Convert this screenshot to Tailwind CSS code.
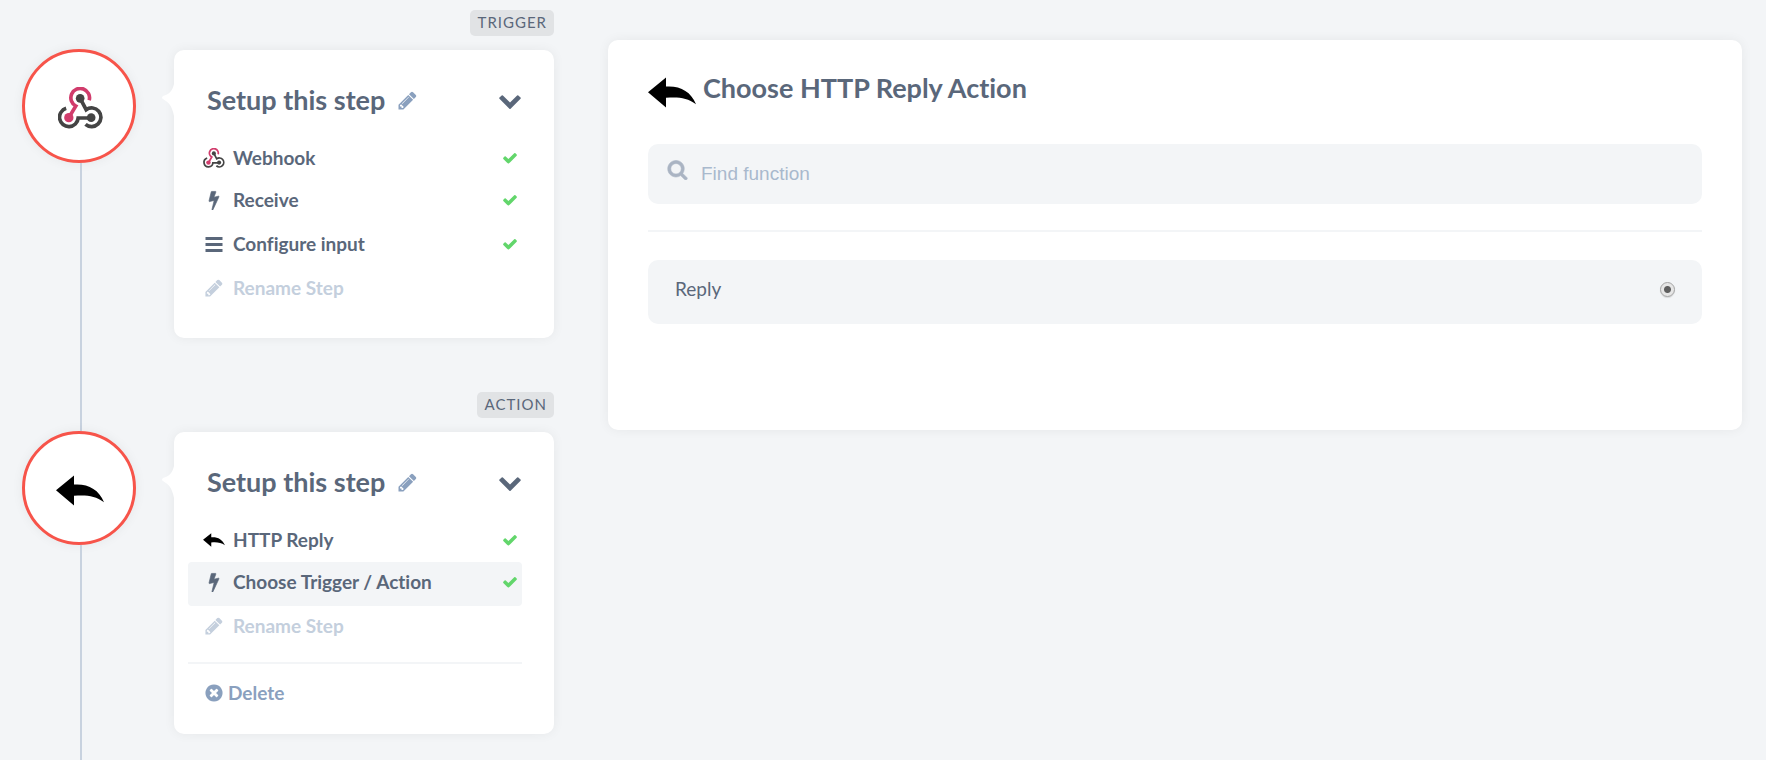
<!DOCTYPE html>
<html lang="en">
<head>
<meta charset="utf-8">
<meta name="viewport" content="width=device-width, initial-scale=1">
<title>Flow steps</title>
<script src="https://cdn.jsdelivr.net/npm/@tailwindcss/browser@4"></script>
</head>
<body class="bg-[#f3f5f7] font-['Lato','Open_Sans',sans-serif] text-[#5a677a] [font-variant-ligatures:no-common-ligatures]">
<svg class="hidden" aria-hidden="true">
  <symbol id="webhook" viewBox="0 0 134 126">
    <g fill="none" stroke-width="11">
      <path stroke="#444" d="M24 64A28 28 0 1 0 60 93H99M66 34L84 68A28 28 0 1 1 82 112"/>
      <path stroke="#d13c6c" d="M93 40A28 28 0 1 0 53 57L32 92"/>
    </g>
    <circle cx="66" cy="34" r="13" fill="#444"/>
    <circle cx="99" cy="92" r="13" fill="#444"/>
    <circle cx="32" cy="92" r="14" fill="#d13c6c"/>
  </symbol>
  <symbol id="reply" viewBox="0 0 144 92"><path fill="#000" d="M0 45L54 1V28C96 25 128 42 144 81C117 62 92 59 54 62V91Z"/></symbol>
  <symbol id="pencil" viewBox="0 0 1792 1792"><path fill="currentColor" d="M491 1536l91-91-235-235-91 91v107h128v128h107zm523-928q0-22-22-22-10 0-17 7l-542 542q-7 7-7 17 0 22 22 22 10 0 17-7l542-542q7-7 7-17zm-54-192l416 416-832 832h-416v-416zm683 96q0 53-37 90l-166 166-416-416 166-165q36-38 90-38 53 0 91 38l235 234q37 39 37 91z"/></symbol>
  <symbol id="check" viewBox="0 0 1792 1792"><path fill="currentColor" d="M1671 566q0 40-28 68l-724 724-136 136q-28 28-68 28t-68-28l-136-136-362-362q-28-28-28-68t28-68l136-136q28-28 68-28t68 28l294 295 656-657q28-28 68-28t68 28l136 136q28 28 28 68z"/></symbol>
  <symbol id="chevron" viewBox="0 0 1792 1792"><path fill="currentColor" d="M1683 808l-742 741q-19 19-45 19t-45-19l-742-741q-19-19-19-45.5t19-45.5l166-165q19-19 45-19t45 19l531 531 531-531q19-19 45-19t45 19l166 165q19 19 19 45.5t-19 45.5z"/></symbol>
  <symbol id="bolt" viewBox="0 0 1792 1792"><path fill="currentColor" stroke="currentColor" stroke-width="60" d="M1333 566q18 20 7 44l-540 1157q-13 25-42 25-4 0-14-2-17-5-25.5-19t-4.5-30l197-808-406 101q-4 1-12 1-18 0-31-11-18-15-13-39l201-825q4-14 16-23t28-9h328q19 0 32 12.5t13 29.5q0 8-5 18l-171 463 396-98q8-2 12-2 19 0 34 15z"/></symbol>
  <symbol id="bars" viewBox="0 0 17 15"><path fill="currentColor" d="M0 0h17v3H0zM0 6h17v3H0zM0 12h17v3H0z"/></symbol>
  <symbol id="remove" viewBox="0 0 1792 1792"><path fill="currentColor" d="M1277 1122q0-26-19-45l-181-181 181-181q19-19 19-45 0-27-19-46l-90-90q-19-19-46-19-26 0-45 19l-181 181-181-181q-19-19-45-19-27 0-46 19l-90 90q-19 19-19 46 0 26 19 45l181 181-181 181q-19 19-19 45 0 27 19 46l90 90q19 19 46 19 26 0 45-19l181-181 181 181q19 19 45 19 27 0 46-19l90-90q19-19 19-46zm387-226q0 209-103 385.5t-279.5 279.5-385.5 103-385.5-103-279.5-279.5-103-385.5 103-385.5 279.5-279.5 385.5-103 385.5 103 279.5 279.5 103 385.5z"/></symbol>
  <symbol id="search" viewBox="0 0 1792 1792"><path fill="currentColor" stroke="currentColor" stroke-width="50" d="M1216 832q0-185-131.5-316.5t-316.5-131.5-316.5 131.5-131.5 316.5 131.5 316.5 316.5 131.5 316.5-131.5 131.5-316.5zm512 832q0 52-38 90t-90 38q-54 0-90-38l-343-342q-179 124-399 124-143 0-273.5-55.5t-225-150-150-225-55.5-273.5 55.5-273.5 150-225 225-150 273.5-55.5 273.5 55.5 225 150 150 225 55.5 273.5q0 220-124 399l343 343q37 37 37 90z"/></symbol>
  <symbol id="notch" viewBox="0 0 12 32"><path fill="#fff" d="M12 0V32C10 21 6 18 1 15Q-1 14 1 12C7 10 10 8 12 0Z"/></symbol>
</svg>

<main class="flex min-h-screen items-stretch gap-[54px] pr-6">
  <div class="flex w-[554px] shrink-0 flex-col pt-2.5">

    <section class="flex">
      <div class="flex w-[158px] shrink-0 flex-col items-center">
        <div class="h-[39px]"></div>
        <div class="flex size-[114px] shrink-0 items-center justify-center rounded-full border-3 border-[#f7544a] bg-white pt-1 pl-0.5 shadow-[0_0_12px_rgba(0,0,0,0.06)]">
          <svg class="h-[42px] w-[45px]"><use href="#webhook"/></svg>
        </div>
        <div class="ml-1 w-0.5 grow bg-[#c8d2df]"></div>
      </div>
      <div class="ml-4 flex grow flex-col items-end gap-3.5 pb-[54px]">
        <span class="flex h-[26px] items-center rounded-[5px] bg-[#e1e3e5] pr-[7px] pb-0.5 pl-2 text-[15px] tracking-[1px]">TRIGGER</span>
        <article class="relative w-full rounded-[10px] bg-white pt-8 pr-8 pb-[26px] pl-3.5 shadow-[0_0_12px_rgba(0,0,0,0.06)]">
          <svg class="absolute top-[34px] -left-3 h-8 w-3"><use href="#notch"/></svg>
          <header class="mb-[18px] flex h-9 items-center pl-[19px]">
            <h2 class="text-[27px] font-bold">Setup this step</h2>
            <button type="button" aria-label="Edit step name" class="ml-3 text-[#8aa0be]"><svg class="size-[21px]"><use href="#pencil"/></svg></button>
            <button type="button" aria-label="Collapse step" class="ml-auto"><svg class="size-6"><use href="#chevron"/></svg></button>
          </header>
          <nav class="flex flex-col text-[19px] font-bold">
            <a href="#" class="flex h-11 items-center gap-[7px] rounded pr-1 pl-3.5"><svg class="h-5 w-6"><use href="#webhook"/></svg>Webhook<svg class="ml-auto size-4 text-[#62d66b]"><use href="#check"/></svg></a>
            <a href="#" class="flex h-11 items-center gap-[7px] rounded pr-1 pb-1 pl-3.5"><svg class="h-5 w-6"><use href="#bolt"/></svg>Receive<svg class="ml-auto size-4 text-[#62d66b]"><use href="#check"/></svg></a>
            <a href="#" class="flex h-11 items-center gap-[7px] rounded pr-1 pb-1 pl-3.5"><svg class="h-[15px] w-6"><use href="#bars"/></svg>Configure input<svg class="ml-auto size-4 text-[#62d66b]"><use href="#check"/></svg></a>
            <a href="#" class="flex h-11 items-center gap-[7px] rounded pr-1 pb-1 pl-3.5 text-[#c4cfdd]"><svg class="h-5 w-6"><use href="#pencil"/></svg>Rename Step</a>
          </nav>
        </article>
      </div>
    </section>

    <section class="flex grow">
      <div class="flex w-[158px] shrink-0 flex-col items-center">
        <div class="ml-1 h-[39px] w-0.5 bg-[#c8d2df]"></div>
        <div class="flex size-[114px] shrink-0 items-center justify-center rounded-full border-3 border-[#f7544a] bg-white pt-1 pl-0.5 shadow-[0_0_12px_rgba(0,0,0,0.06)]">
          <svg class="h-[31px] w-12"><use href="#reply"/></svg>
        </div>
        <div class="ml-1 w-0.5 grow bg-[#c8d2df]"></div>
      </div>
      <div class="ml-4 flex grow flex-col items-end gap-3.5 pb-6">
        <span class="flex h-[26px] items-center rounded-[5px] bg-[#e1e3e5] pr-[7px] pb-0.5 pl-2 text-[15px] tracking-[1px]">ACTION</span>
        <article class="relative w-full rounded-[10px] bg-white pt-8 pr-8 pb-[18px] pl-3.5 shadow-[0_0_12px_rgba(0,0,0,0.06)]">
          <svg class="absolute top-[34px] -left-3 h-8 w-3"><use href="#notch"/></svg>
          <header class="mb-[18px] flex h-9 items-center pl-[19px]">
            <h2 class="text-[27px] font-bold">Setup this step</h2>
            <button type="button" aria-label="Edit step name" class="ml-3 text-[#8aa0be]"><svg class="size-[21px]"><use href="#pencil"/></svg></button>
            <button type="button" aria-label="Collapse step" class="ml-auto"><svg class="size-6"><use href="#chevron"/></svg></button>
          </header>
          <nav class="flex flex-col text-[19px] font-bold">
            <a href="#" class="flex h-11 items-center gap-[7px] rounded pr-1 pl-3.5"><svg class="h-[14px] w-6"><use href="#reply"/></svg>HTTP Reply<svg class="ml-auto size-4 text-[#62d66b]"><use href="#check"/></svg></a>
            <a href="#" aria-current="step" class="flex h-11 items-center gap-[7px] rounded bg-[#f3f5f7] pr-1 pb-1 pl-3.5"><svg class="h-5 w-6"><use href="#bolt"/></svg>Choose Trigger / Action<svg class="ml-auto size-4 text-[#62d66b]"><use href="#check"/></svg></a>
            <a href="#" class="flex h-11 items-center gap-[7px] rounded pr-1 pb-1 pl-3.5 text-[#c4cfdd]"><svg class="h-5 w-6"><use href="#pencil"/></svg>Rename Step</a>
          </nav>
          <hr class="mt-3 mb-2 border-t-2 border-[#f3f5f7]">
          <button type="button" class="flex h-11 items-center gap-1 pb-0.5 pl-4 text-[19px] font-bold text-[#8aa0be]"><svg class="size-5"><use href="#remove"/></svg>Delete</button>
        </article>
      </div>
    </section>
  </div>

  <section class="mt-10 min-w-0 grow self-start rounded-[10px] bg-white px-10 pt-8 pb-[106px] shadow-[0_0_12px_rgba(0,0,0,0.06)]">
    <header class="flex h-8 items-center gap-[7px]">
      <svg class="mt-2 h-[31px] w-12"><use href="#reply"/></svg>
      <h1 class="text-[27px] font-bold">Choose HTTP Reply Action</h1>
    </header>
    <label class="mt-10 flex h-[60px] items-center gap-[13px] rounded-[10px] bg-[#f3f5f7] px-[19px]">
      <svg class="mb-2.5 size-[21px] shrink-0 text-[#aab4c3]"><use href="#search"/></svg>
      <input type="text" aria-label="Find function" placeholder="Find function" class="min-w-0 grow bg-transparent font-['Liberation_Sans',sans-serif] text-[19px] outline-none placeholder:text-[#a9b9cd]">
    </label>
    <hr class="mt-[26px] mb-7 border-t-2 border-[#f3f5f7]">
    <label class="flex h-16 items-center justify-between rounded-[10px] bg-[#f3f5f7] pr-[27px] pb-1.5 pl-[27px] text-[19px]">
      Reply
      <input type="radio" name="function" checked class="size-[15px] appearance-none rounded-full border border-[#a6a6a6] bg-[#e6e6e6] shadow-[0_1px_1px_rgba(0,0,0,0.12)] checked:bg-[radial-gradient(circle,#5f5f5f_3px,#e6e6e6_4px)]">
    </label>
  </section>
</main>
</body>
</html>
